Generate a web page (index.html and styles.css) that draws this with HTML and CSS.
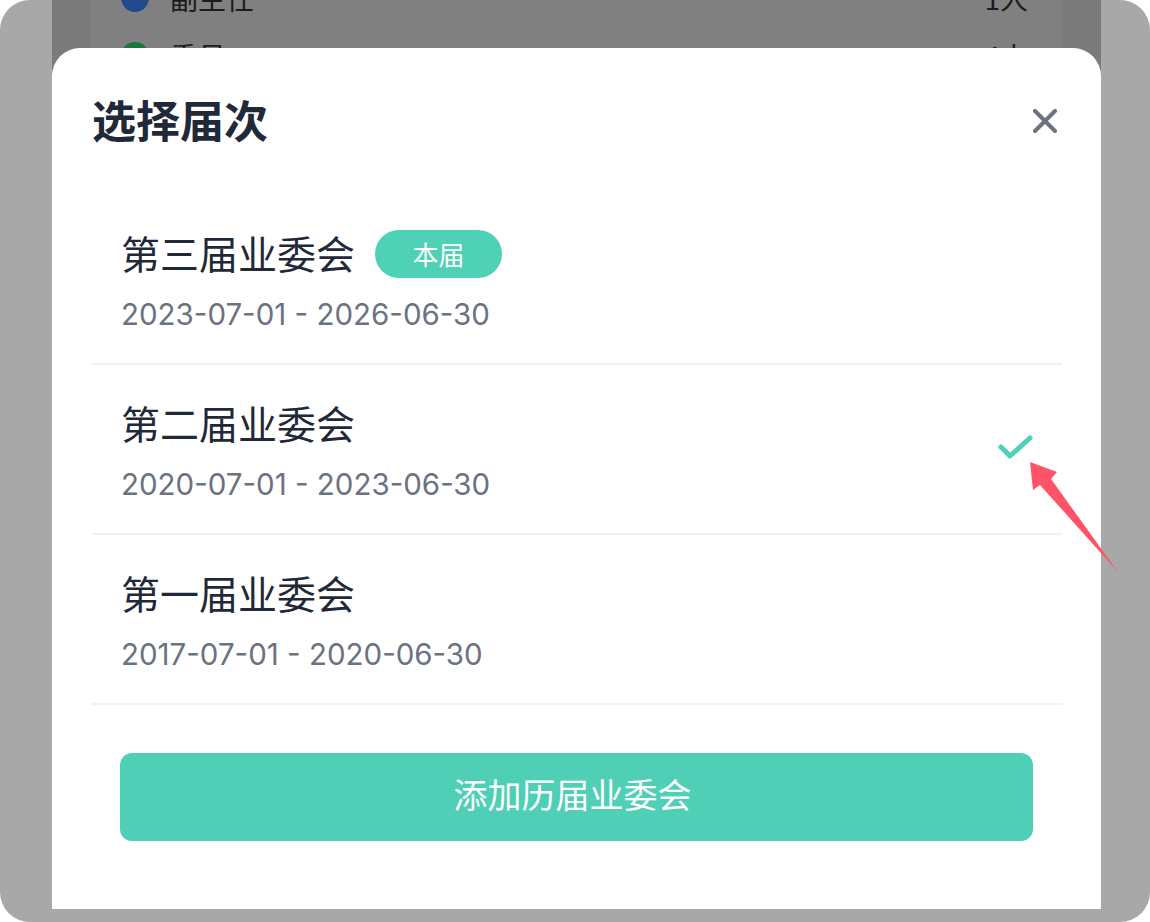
FILE: index.html
```html
<!DOCTYPE html>
<html lang="zh-CN">
<head>
    <meta charset="UTF-8">
    <meta name="viewport" content="width=device-width, initial-scale=1.0">
    <title>选择届次</title>
    <link rel="stylesheet" href="styles.css">
</head>
<body>
    <div class="device">
        <div class="screen">
            <!-- page behind the sheet -->
            <div class="page-card">
                <div class="member-row">
                    <span class="dot dot-blue"></span>
                    <span class="member-name">副主任</span>
                    <span class="member-count">1人</span>
                </div>
                <div class="member-row">
                    <span class="dot dot-green"></span>
                    <span class="member-name">委员</span>
                    <span class="member-count">4人</span>
                </div>
            </div>

            <!-- bottom sheet -->
            <div class="sheet">
                <div class="sheet-header">
                    <h2 class="sheet-title">选择届次</h2>
                    <button class="close-btn" aria-label="关闭">
                        <svg width="24" height="24" viewBox="0 0 24 24">
                            <path d="M2 2 L22 22 M22 2 L2 22" stroke="#6b7280" stroke-width="4" stroke-linecap="round" fill="none"/>
                        </svg>
                    </button>
                </div>

                <div class="term-list">
                    <div class="term-item">
                        <div class="term-info">
                            <div class="term-name">第三届业委会 <span class="badge">本届</span></div>
                            <div class="term-date">2023-07-01 - 2026-06-30</div>
                        </div>
                    </div>
                    <div class="term-item selected">
                        <div class="term-info">
                            <div class="term-name">第二届业委会</div>
                            <div class="term-date">2020-07-01 - 2023-06-30</div>
                        </div>
                        <svg class="check" width="36" height="28" viewBox="0 0 36 28">
                            <path d="M3 12 L12 21 L32 3" stroke="#4fd1b5" stroke-width="5" stroke-linecap="round" stroke-linejoin="round" fill="none"/>
                        </svg>
                    </div>
                    <div class="term-item">
                        <div class="term-info">
                            <div class="term-name">第一届业委会</div>
                            <div class="term-date">2017-07-01 - 2020-06-30</div>
                        </div>
                    </div>
                </div>

                <button class="add-btn">添加历届业委会</button>
            </div>
        </div>

        <!-- annotation arrow -->
        <svg class="pointer" width="110" height="125" viewBox="0 0 110 125">
            <polygon points="10,7 37,17 31,24 98,117 20,30 13,35" fill="#ff5468"/>
        </svg>
    </div>
</body>
</html>
```

FILE: styles.css
```css
body {
    margin: 0;
    background-color: #fff;
    font-family: Inter, "Noto Sans", "Noto Sans CJK SC", sans-serif;
}

.device {
    position: relative;
    width: 1150px;
    height: 922px;
    box-sizing: border-box;
    padding: 0 49px 13px 52px;
    border-radius: 30px;
    background-color: #a8a8a8;
    overflow: hidden;
    display: flex;
    flex-direction: column;
}

.screen {
    position: relative;
    flex: 1;
    background-color: #7b7b7b;
    overflow: hidden;
}

.page-card {
    margin: -31px 39px 0;
    padding: 0 34px 0 30px;
    background-color: #808080;
}
.member-row {
    height: 58px;
    display: flex;
    align-items: center;
    font-size: 28px;
    color: #1c1c1e;
    font-family: "Noto Sans CJK SC", sans-serif;
}
.dot {
    width: 28px;
    height: 28px;
    border-radius: 50%;
    margin-right: 21px;
}
.dot-blue {
    background-color: #234a8d;
}
.dot-green {
    background-color: #137a3a;
}
.member-name {
    flex: 1;
}

.sheet {
    position: absolute;
    left: 0;
    right: 0;
    bottom: 0;
    top: 48px;
    background-color: #fff;
    border-radius: 28px 28px 0 0;
    display: flex;
    flex-direction: column;
}

.sheet-header {
    display: flex;
    justify-content: space-between;
    align-items: center;
    padding: 46px 44px 0 40px;
}
.sheet-title {
    margin: 0;
    font-size: 44px;
    line-height: 50px;
    font-weight: 700;
    color: #1f2937;
    font-family: "Noto Sans CJK SC", sans-serif;
}
.close-btn {
    border: none;
    background: none;
    padding: 0;
    width: 24px;
    height: 24px;
    margin-top: 4px;
    cursor: pointer;
}

.term-list {
    margin: 51px 39px 0;
}
.term-item {
    display: flex;
    align-items: center;
    padding: 32px 30px 29px;
    border-bottom: 2px solid #f1f2f4;
    cursor: pointer;
}
.term-info {
    flex: 1;
}
.term-name {
    display: flex;
    align-items: center;
    height: 50px;
    font-size: 39px;
    color: #1f2937;
    font-family: "Noto Sans CJK SC", sans-serif;
}
.badge {
    margin-left: 20px;
    margin-top: 3px;
    width: 127px;
    height: 48px;
    border-radius: 24px;
    background-color: #4fd1b5;
    color: #fff;
    font-size: 26px;
    display: flex;
    justify-content: center;
    align-items: center;
}
.term-date {
    margin-top: 17px;
    height: 40px;
    line-height: 40px;
    font-size: 29.5px;
    color: #6b7280;
}
.check {
    margin-right: -2px;
    margin-top: -4px;
}

.add-btn {
    margin: 48px 68px 0;
    height: 88px;
    padding: 0 8px 8px 0;
    border: none;
    border-radius: 12px;
    background-color: #4ecfb6;
    color: #fff;
    font-size: 34px;
    font-family: "Noto Sans CJK SC", sans-serif;
    cursor: pointer;
}

.pointer {
    position: absolute;
    left: 1020px;
    top: 455px;
}
```
